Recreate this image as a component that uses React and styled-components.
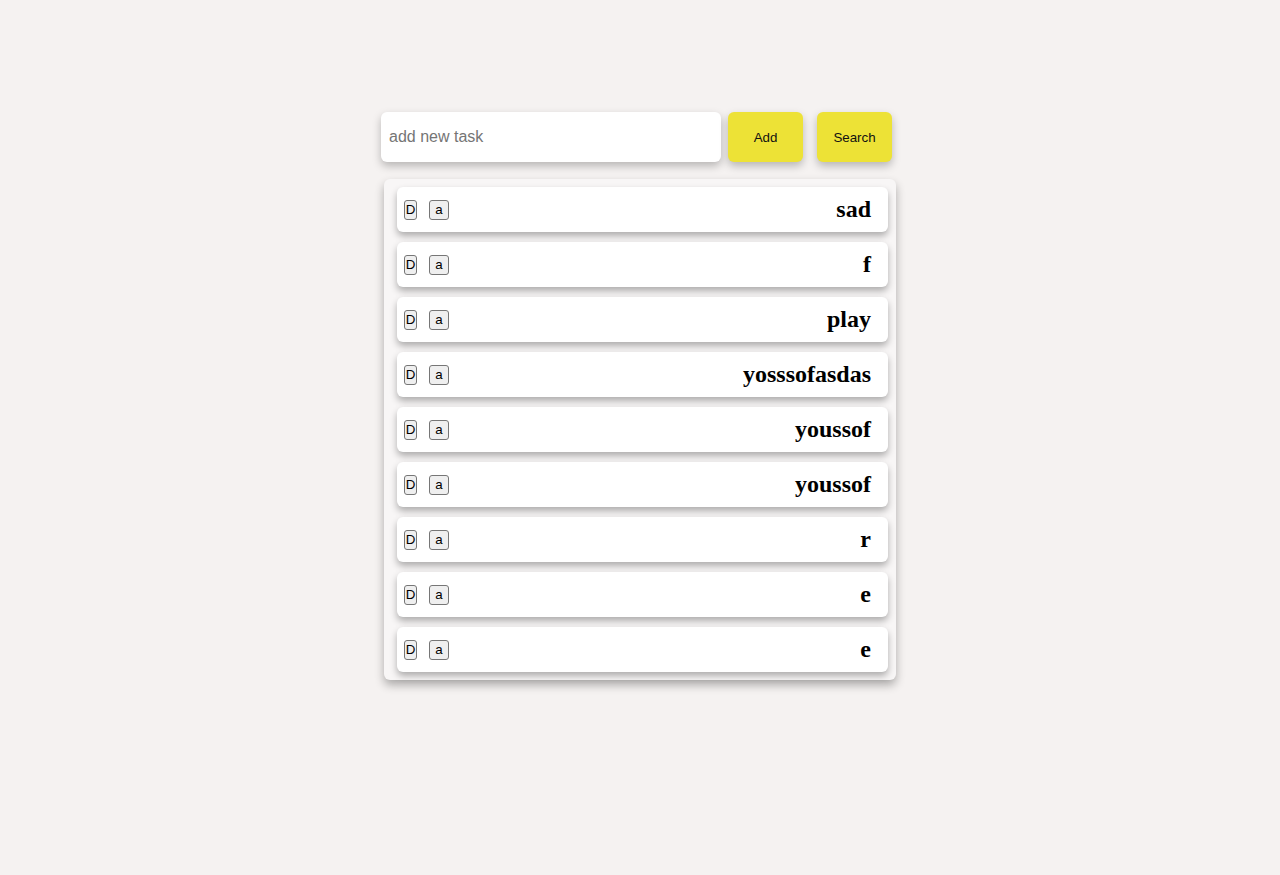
import React from 'react';
import styled, { createGlobalStyle } from 'styled-components';

const tasks = ['sad', 'f', 'play', 'yosssofasdas', 'youssof', 'youssof', 'r', 'e', 'e'];

function App() {
    return (
        <>
            <GlobalStyle />
            <Page>
                <Toolbar>
                    <TaskInput placeholder="add new task" />
                    <YellowButton>Add</YellowButton>
                    <YellowButton $gap={14}>Search</YellowButton>
                </Toolbar>
                <ListBox>
                    {tasks.map((t, i) => (
                        <TaskRow key={i}>
                            <SmallBtn $narrow>D</SmallBtn>
                            <SmallBtn>a</SmallBtn>
                            <TaskTitle>{t}</TaskTitle>
                        </TaskRow>
                    ))}
                </ListBox>
            </Page>
        </>
    );
}

export default App;

const GlobalStyle = createGlobalStyle`
    body {
        margin: 0;
        background: #f5f2f1;
        font-family: "Liberation Sans", Arial, sans-serif;
    }
`;

const Page = styled.div`
    display: flex;
    flex-direction: column;
    align-items: flex-start;
    padding: 112px 0 0 381px;
    min-height: 875px;
    box-sizing: border-box;
`;

const Toolbar = styled.div`
    display: flex;
    align-items: center;
`;

const TaskInput = styled.input`
    width: 340px;
    height: 50px;
    box-sizing: border-box;
    border: none;
    outline: none;
    border-radius: 6px;
    background: #fff;
    padding: 0 8px;
    font-family: "Liberation Sans", Arial, sans-serif;
    font-size: 16px;
    box-shadow: 0 4px 8px rgba(0, 0, 0, 0.25);
    &::placeholder {
        color: #757575;
    }
`;

const YellowButton = styled.button`
    width: 75px;
    height: 50px;
    margin-left: ${(p) => p.$gap || 7}px;
    border: none;
    border-radius: 6px;
    background: #ede236;
    color: #111;
    font-family: "Liberation Sans", Arial, sans-serif;
    font-size: 13.33px;
    box-shadow: 0 4px 8px rgba(0, 0, 0, 0.25);
    cursor: pointer;
`;

const ListBox = styled.div`
    margin: 17px 0 0 3px;
    width: 512px;
    box-sizing: border-box;
    padding: 8px 8px 8px 13px;
    background: #f8f6f6;
    border-radius: 6px;
    box-shadow: 0 5px 10px rgba(0, 0, 0, 0.3);
    display: flex;
    flex-direction: column;
    gap: 10px;
`;

const TaskRow = styled.div`
    height: 45px;
    box-sizing: border-box;
    display: flex;
    align-items: center;
    padding: 0 17px 0 7px;
    background: #fff;
    border-radius: 6px;
    box-shadow: 0 4px 7px rgba(0, 0, 0, 0.3);
`;

const SmallBtn = styled.button`
    height: 20px;
    box-sizing: border-box;
    padding: ${(p) => (p.$narrow ? '0' : '0 5px')};
    width: ${(p) => (p.$narrow ? '13px' : '20px')};
    margin-right: 12px;
    border: 1px solid #767676;
    border-radius: 3px;
    background: #efefef;
    color: #000;
    font-family: "Liberation Sans", Arial, sans-serif;
    font-size: 13.33px;
    line-height: 1;
`;

const TaskTitle = styled.h2`
    margin: 0 0 0 auto;
    font-family: "Liberation Serif", "Times New Roman", serif;
    font-weight: bold;
    font-size: 24px;
    color: #000;
`;
